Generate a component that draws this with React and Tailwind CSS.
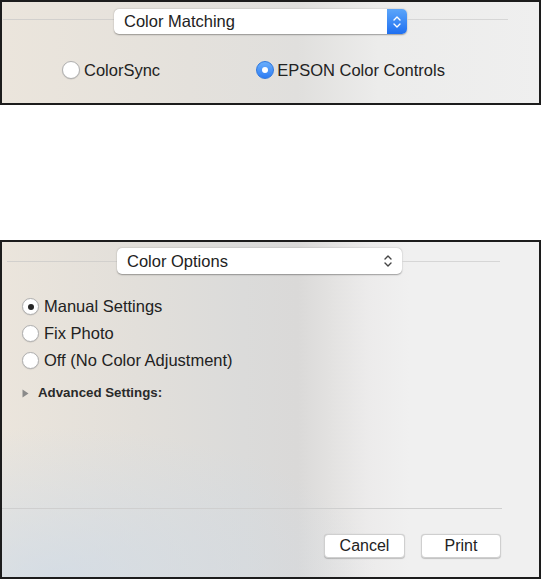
import React from "react";

const font = { fontFamily: '"Liberation Sans", Arial, sans-serif' };

function Chevrons({ color }) {
  return (
    <svg width="8" height="14" viewBox="0 0 8 14" fill="none">
      <path d="M1 5 L4 2 L7 5" stroke={color} strokeWidth="1.4" strokeLinecap="round" strokeLinejoin="round" />
      <path d="M1 9 L4 12 L7 9" stroke={color} strokeWidth="1.4" strokeLinecap="round" strokeLinejoin="round" />
    </svg>
  );
}

function Radio({ state, size = "w-[18px] h-[18px]" }) {
  if (state === "blue") {
    return (
      <span className={`${size} rounded-full flex items-center justify-center bg-linear-to-b from-[#6aaefb] to-[#2c7cf4] border border-[#2f78de] shrink-0`}>
        <span className="w-[6px] h-[6px] rounded-full bg-white" />
      </span>
    );
  }
  return (
    <span className={`${size} rounded-full flex items-center justify-center bg-white border border-[#b0b0b0] shadow-[0_0.5px_1px_rgba(0,0,0,0.15)] shrink-0`}>
      {state === "dark" && <span className="w-[6px] h-[6px] rounded-full bg-[#262626]" />}
    </span>
  );
}

function Popup({ label, width, blue }) {
  return (
    <div
      className={`${width} h-[25px] flex items-stretch bg-white rounded-[5px] shadow-[0_0.5px_1.5px_rgba(0,0,0,0.35)] shrink-0`}
    >
      <div className="flex-1 flex items-center pl-[10px] text-[16.5px] text-[#222]">{label}</div>
      {blue ? (
        <div className="w-[20px] rounded-r-[5px] bg-linear-to-b from-[#5ba5fa] to-[#1f6ff0] flex items-center justify-center">
          <Chevrons color="#ffffff" />
        </div>
      ) : (
        <div className="w-[20px] flex items-center justify-center mr-[4px]">
          <Chevrons color="#444444" />
        </div>
      )}
    </div>
  );
}

function Button({ children, width }) {
  return (
    <div
      className={`${width} h-[24px] rounded-[4px] bg-white border border-[#cfcfcf] shadow-[0_0.5px_1px_rgba(0,0,0,0.2)] flex items-center justify-center text-[16px] text-[#222]`}
    >
      {children}
    </div>
  );
}

export default function App() {
  return (
    <div className="w-[541px] h-[579px] bg-white" style={font}>
      {/* Color Matching panel */}
      <div className="h-[105px] border-2 border-[#1c1c1c] bg-[image:linear-gradient(to_right,#ebe5dc_0%,#e4e1dc_35%,#e0dfdd_55%,#ececeb_70%,#efefef_100%)]">
        <div className="flex items-start mt-[7px] ml-[1px]">
          <div className="w-[111px] h-px bg-[#d2d0cd] mt-[10px]" />
          <Popup label="Color Matching" width="w-[293px]" blue />
          <div className="w-[101px] h-px bg-[#d6d6d6] mt-[10px]" />
        </div>
        <div className="flex items-center h-[20px] mt-[26px] text-[16.5px] text-[#222]">
          <div className="flex items-center gap-[4px] ml-[60px]">
            <Radio state="off" />
            <span>ColorSync</span>
          </div>
          <div className="flex items-center gap-[3px] ml-[96px]">
            <Radio state="blue" />
            <span>EPSON Color Controls</span>
          </div>
        </div>
      </div>

      <div className="h-[135px]" />

      {/* Color Options panel */}
      <div className="h-[339px] border-2 border-[#1c1c1c] flex flex-col bg-[image:radial-gradient(ellipse_60%_45%_at_10%_100%,rgba(205,218,232,0.7),transparent),linear-gradient(to_right,#ebe5dc_0%,#e2dfda_25%,#dbdbda_45%,#dad9d8_55%,#e4e3e2_62%,#ecebeb_68%,#f0f0f0_76%,#f0f0f0_100%)]">
        <div className="flex items-start mt-[6px]">
          <div className="w-[5px]" />
          <div className="w-[110px] h-px bg-[#d2d0cd] mt-[13px]" />
          <Popup label="Color Options" width="w-[285px] h-[26px]" />
          <div className="w-[98px] h-px bg-[#d6d6d6] mt-[13px]" />
        </div>

        <div className="flex flex-col mt-[19px] ml-[20px] text-[16.5px] text-[#222]">
          <div className="h-[27px] flex items-center gap-[5px]">
            <Radio state="dark" size="w-[17px] h-[17px]" />
            <span>Manual Settings</span>
          </div>
          <div className="h-[27px] flex items-center gap-[5px]">
            <Radio state="off" size="w-[17px] h-[17px]" />
            <span>Fix Photo</span>
          </div>
          <div className="h-[27px] flex items-center gap-[5px]">
            <Radio state="off" size="w-[17px] h-[17px]" />
            <span>Off (No Color Adjustment)</span>
          </div>
          <div className="h-[20px] mt-[9px] flex items-center gap-[9px]">
            <svg width="7" height="9" viewBox="0 0 7 9">
              <path d="M0.5 0.5 L6.5 4.5 L0.5 8.5 Z" fill="#8a8a8a" />
            </svg>
            <span className="text-[13.3px] font-bold text-[#2a2a2a]">Advanced Settings:</span>
          </div>
        </div>

        <div className="mt-auto pb-[19px]">
          <div className="w-[500px] h-px bg-[#cfcfcf]" />
          <div className="flex justify-end gap-[16px] mt-[25px] mr-[38px]">
            <Button width="w-[81px]">Cancel</Button>
            <Button width="w-[80px]">Print</Button>
          </div>
        </div>
      </div>
    </div>
  );
}
